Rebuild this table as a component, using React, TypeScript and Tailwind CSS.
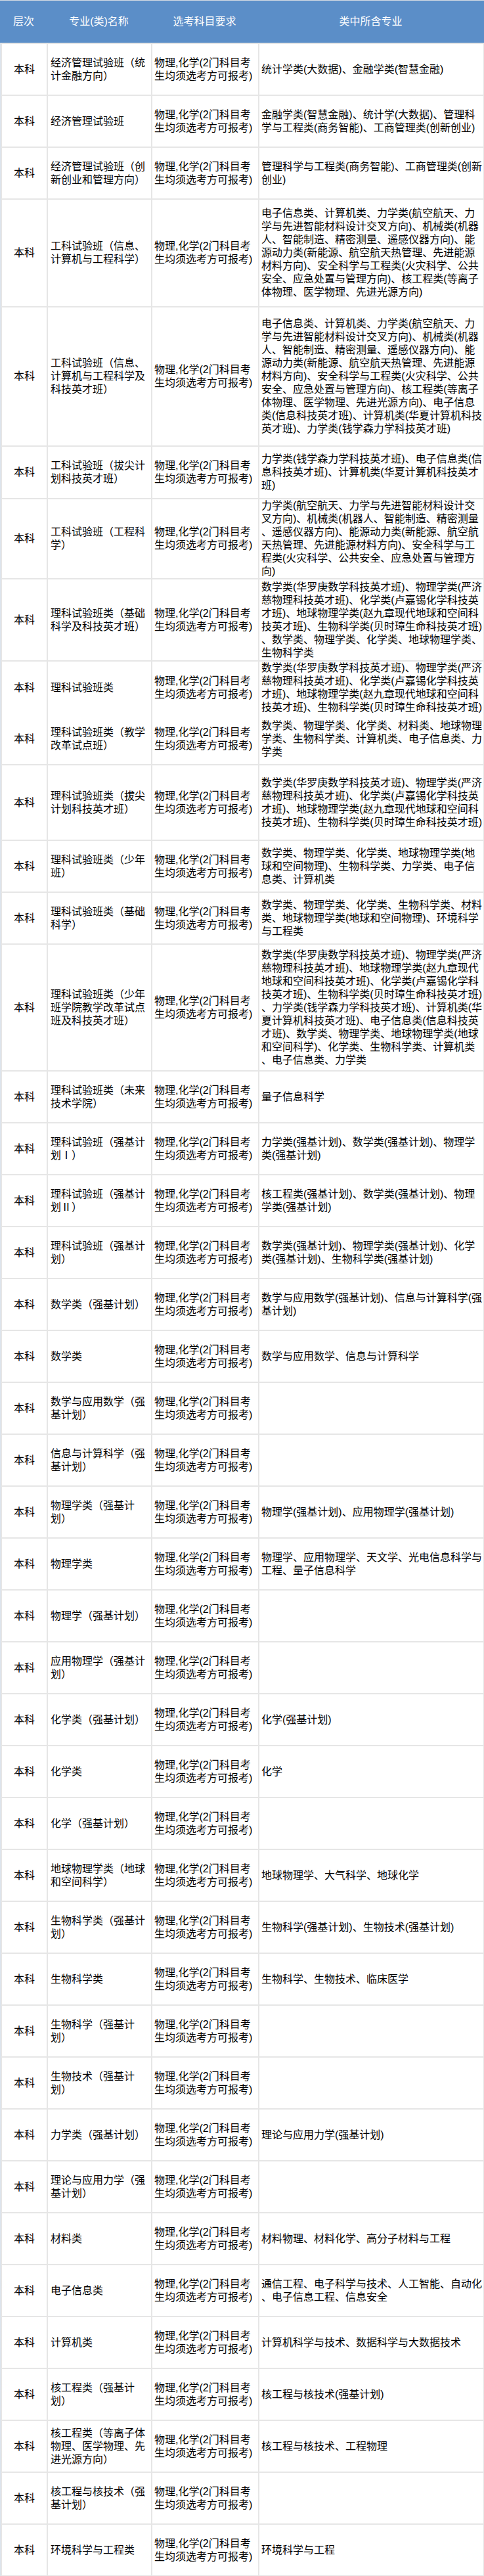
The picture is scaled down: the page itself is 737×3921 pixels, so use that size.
const SUBJECT = "物理,化学(2门科目考生均须选考方可报考)";

const ENG_A =
  "电子信息类、计算机类、力学类(航空航天、力学与先进智能材料设计交叉方向)、机械类(机器人、智能制造、精密测量、遥感仪器方向)、能源动力类(新能源、航空航天热管理、先进能源材料方向)、安全科学与工程类(火灾科学、公共安全、应急处置与管理方向)、核工程类(等离子体物理、医学物理、先进光源方向)";

const SCI_TALENT =
  "数学类(华罗庚数学科技英才班)、物理学类(严济慈物理科技英才班)、化学类(卢嘉锡化学科技英才班)、地球物理学类(赵九章现代地球和空间科技英才班)、生物科学类(贝时璋生命科技英才班)";

type Row = { name: string; majors: string; h?: string };

// h = cell height, rows without it use the default 77px
const ROWS: Row[] = [
  { name: "经济管理试验班（统计金融方向）", majors: "统计学类(大数据)、金融学类(智慧金融)" },
  { name: "经济管理试验班", majors: "金融学类(智慧金融)、统计学(大数据)、管理科学与工程类(商务智能)、工商管理类(创新创业)" },
  { name: "经济管理试验班（创新创业和管理方向）", majors: "管理科学与工程类(商务智能)、工商管理类(创新创业)" },
  { name: "工科试验班（信息、计算机与工程科学）", majors: ENG_A, h: "h-[162px]" },
  {
    name: "工科试验班（信息、计算机与工程科学及科技英才班）",
    majors: ENG_A + "、电子信息类(信息科技英才班)、计算机类(华夏计算机科技英才班)、力学类(钱学森力学科技英才班)",
    h: "h-[210px]",
  },
  { name: "工科试验班（拔尖计划科技英才班）", majors: "力学类(钱学森力学科技英才班)、电子信息类(信息科技英才班)、计算机类(华夏计算机科技英才班)", h: "h-[78px]" },
  {
    name: "工科试验班（工程科学）",
    majors:
      "力学类(航空航天、力学与先进智能材料设计交叉方向)、机械类(机器人、智能制造、精密测量、遥感仪器方向)、能源动力类(新能源、航空航天热管理、先进能源材料方向)、安全科学与工程类(火灾科学、公共安全、应急处置与管理方向)",
    h: "h-[120px]",
  },
  { name: "理科试验班类（基础科学及科技英才班）", majors: SCI_TALENT + "、数学类、物理学类、化学类、地球物理学类、生物科学类", h: "h-[123px]" },
  { name: "理科试验班类", majors: SCI_TALENT },
  { name: "理科试验班类（教学改革试点班）", majors: "数学类、物理学类、化学类、材料类、地球物理学类、生物科学类、计算机类、电子信息类、力学类" },
  { name: "理科试验班类（拔尖计划科技英才班）", majors: SCI_TALENT, h: "h-[113px]" },
  { name: "理科试验班类（少年班）", majors: "数学类、物理学类、化学类、地球物理学类(地球和空间物理)、生物科学类、力学类、电子信息类、计算机类" },
  { name: "理科试验班类（基础科学）", majors: "数学类、物理学类、化学类、生物科学类、材料类、地球物理学类(地球和空间物理)、环境科学与工程类" },
  {
    name: "理科试验班类（少年班学院教学改革试点班及科技英才班）",
    majors:
      "数学类(华罗庚数学科技英才班)、物理学类(严济慈物理科技英才班)、地球物理学类(赵九章现代地球和空间科技英才班)、化学类(卢嘉锡化学科技英才班)、生物科学类(贝时璋生命科技英才班)、力学类(钱学森力学科技英才班)、计算机类(华夏计算机科技英才班)、电子信息类(信息科技英才班)、数学类、物理学类、地球物理学类(地球和空间科学)、化学类、生物科学类、计算机类、电子信息类、力学类",
    h: "h-[191px]",
  },
  { name: "理科试验班类（未来技术学院）", majors: "量子信息科学" },
  { name: "理科试验班（强基计划Ⅰ）", majors: "力学类(强基计划)、数学类(强基计划)、物理学类(强基计划)" },
  { name: "理科试验班（强基计划Ⅱ）", majors: "核工程类(强基计划)、数学类(强基计划)、物理学类(强基计划)" },
  { name: "理科试验班（强基计划）", majors: "数学类(强基计划)、物理学类(强基计划)、化学类(强基计划)、生物科学类(强基计划)" },
  { name: "数学类（强基计划）", majors: "数学与应用数学(强基计划)、信息与计算科学(强基计划)" },
  { name: "数学类", majors: "数学与应用数学、信息与计算科学" },
  { name: "数学与应用数学（强基计划）", majors: "" },
  { name: "信息与计算科学（强基计划）", majors: "" },
  { name: "物理学类（强基计划）", majors: "物理学(强基计划)、应用物理学(强基计划)" },
  { name: "物理学类", majors: "物理学、应用物理学、天文学、光电信息科学与工程、量子信息科学" },
  { name: "物理学（强基计划）", majors: "" },
  { name: "应用物理学（强基计划）", majors: "" },
  { name: "化学类（强基计划）", majors: "化学(强基计划)" },
  { name: "化学类", majors: "化学" },
  { name: "化学（强基计划）", majors: "" },
  { name: "地球物理学类（地球和空间科学）", majors: "地球物理学、大气科学、地球化学" },
  { name: "生物科学类（强基计划）", majors: "生物科学(强基计划)、生物技术(强基计划)" },
  { name: "生物科学类", majors: "生物科学、生物技术、临床医学" },
  { name: "生物科学（强基计划）", majors: "" },
  { name: "生物技术（强基计划）", majors: "" },
  { name: "力学类（强基计划）", majors: "理论与应用力学(强基计划)" },
  { name: "理论与应用力学（强基计划）", majors: "" },
  { name: "材料类", majors: "材料物理、材料化学、高分子材料与工程" },
  { name: "电子信息类", majors: "通信工程、电子科学与技术、人工智能、自动化、电子信息工程、信息安全" },
  { name: "计算机类", majors: "计算机科学与技术、数据科学与大数据技术" },
  { name: "核工程类（强基计划）", majors: "核工程与核技术(强基计划)" },
  { name: "核工程类（等离子体物理、医学物理、先进光源方向）", majors: "核工程与核技术、工程物理" },
  { name: "核工程与核技术（强基计划）", majors: "" },
  { name: "环境科学与工程类", majors: "环境科学与工程" },
];

const COLS = "grid grid-cols-[68px_157px_161px_341px] gap-[2px]";

export default function App() {
  return (
    <div className="w-[737px] bg-white font-['Liberation_Sans','Noto_Sans_CJK_SC',sans-serif] text-[16px] leading-[20px] text-black">
      {/* header */}
      <div className={`${COLS} h-[65px] bg-[#5b8ec8] px-[2px] border-t border-[#d6dce4] text-white`}>
        <div className="flex items-center justify-center">层次</div>
        <div className="flex items-center justify-center">专业(类)名称</div>
        <div className="flex items-center justify-center">选考科目要求</div>
        <div className="flex items-center justify-center">类中所含专业</div>
      </div>

      {/* body */}
      <div className="flex flex-col gap-[2px] bg-[#e6e6e6] p-[2px] border-l border-[#dbe3ee]">
        {ROWS.map((r, i) => (
          <div key={i} className={`${COLS} ${r.h ?? "h-[77px]"}`}>
            <div className="flex items-center justify-center bg-white">本科</div>
            <div className="flex items-center bg-white px-[4px] break-all">{r.name}</div>
            <div className="flex items-center bg-white pl-[3px] break-all">{SUBJECT}</div>
            <div className="flex items-center bg-white pl-[3px] break-all [line-break:anywhere]">{r.majors}</div>
          </div>
        ))}
      </div>
    </div>
  );
}
